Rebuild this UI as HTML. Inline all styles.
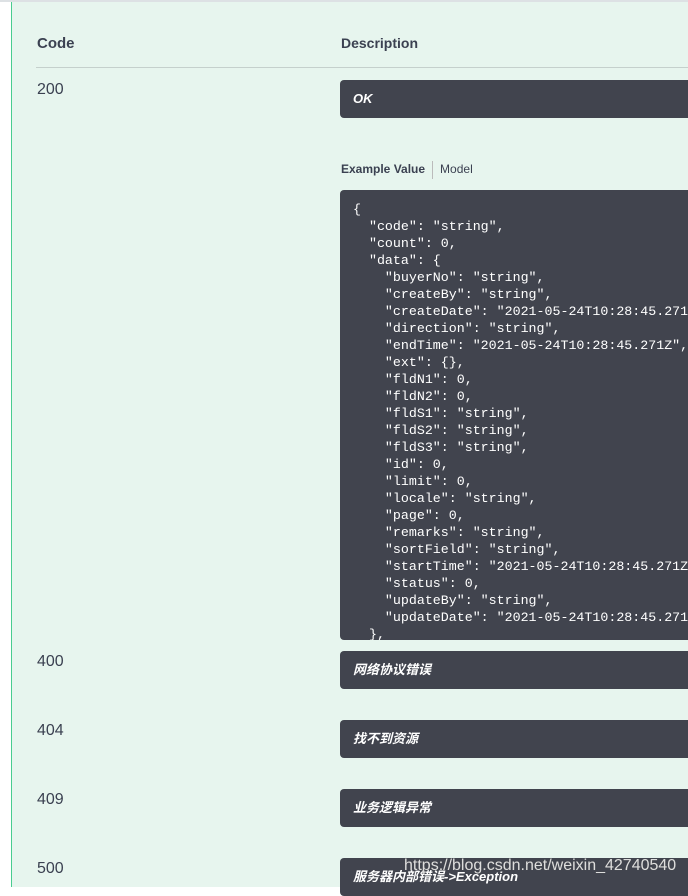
<!DOCTYPE html>
<html><head><meta charset="utf-8"><style>
body{margin:0;width:688px;height:887px;overflow:hidden;background:#fff;position:relative;font-family:"Liberation Sans","Noto Sans CJK SC",sans-serif}
.top{position:absolute;left:0;top:0;width:688px;height:2px;background:#dde1e4}
.bg{position:absolute;left:11px;top:2px;width:677px;height:885px;background:#e7f5ee;border-left:1px solid #49cc90}
.h{position:absolute;font-weight:bold;font-size:14px;color:#3b4151}
.div{position:absolute;left:36px;top:67px;width:652px;height:1px;background:#c5d0cc}
.code{position:absolute;left:37px;font-size:16px;color:#3b4151}
.box{position:absolute;left:340px;width:360px;height:38px;background:#41444e;border-radius:4px;color:#fff;font-style:italic;font-weight:bold;font-size:13px;line-height:38px;padding-left:13px;box-sizing:border-box}
pre{position:absolute;left:340px;top:190px;width:360px;height:450px;margin:0;background:#41444e;border-radius:4px;color:#fff;font-family:"Liberation Mono",monospace;font-size:13.3px;line-height:17px;padding:11px 13px;box-sizing:border-box;overflow:hidden;font-weight:normal}
.wm{position:absolute;left:404px;top:857px;font-size:16px;color:#ddd;text-shadow:0 0 1px #555}
</style></head><body>
<div class="top"></div><div class="bg"></div>
<div class="h" style="left:37px;top:35px;font-size:15px">Code</div>
<div class="h" style="left:341px;top:35px">Description</div>
<div class="div"></div>
<div class="code" style="top:81px">200</div>
<div class="box" style="top:80px">OK</div>
<div style="position:absolute;left:341px;top:161px;font-size:12px;color:#3b4151"><b>Example Value</b><span style="display:inline-block;width:1px;height:18px;background:#bbb;margin:0 7px;vertical-align:middle"></span>Model</div>
<pre>{
  "code": "string",
  "count": 0,
  "data": {
    "buyerNo": "string",
    "createBy": "string",
    "createDate": "2021-05-24T10:28:45.271Z",
    "direction": "string",
    "endTime": "2021-05-24T10:28:45.271Z",
    "ext": {},
    "fldN1": 0,
    "fldN2": 0,
    "fldS1": "string",
    "fldS2": "string",
    "fldS3": "string",
    "id": 0,
    "limit": 0,
    "locale": "string",
    "page": 0,
    "remarks": "string",
    "sortField": "string",
    "startTime": "2021-05-24T10:28:45.271Z",
    "status": 0,
    "updateBy": "string",
    "updateDate": "2021-05-24T10:28:45.271Z"
  },</pre>
<div class="code" style="top:653px">400</div>
<div class="box" style="top:651px">网络协议错误</div>
<div class="code" style="top:722px">404</div>
<div class="box" style="top:720px">找不到资源</div>
<div class="code" style="top:791px">409</div>
<div class="box" style="top:789px">业务逻辑异常</div>
<div class="code" style="top:860px">500</div>
<div class="box" style="top:858px">服务器内部错误-&gt;Exception</div>
<div class="wm">https://blog.csdn.net/weixin_42740540</div>
</body></html>
